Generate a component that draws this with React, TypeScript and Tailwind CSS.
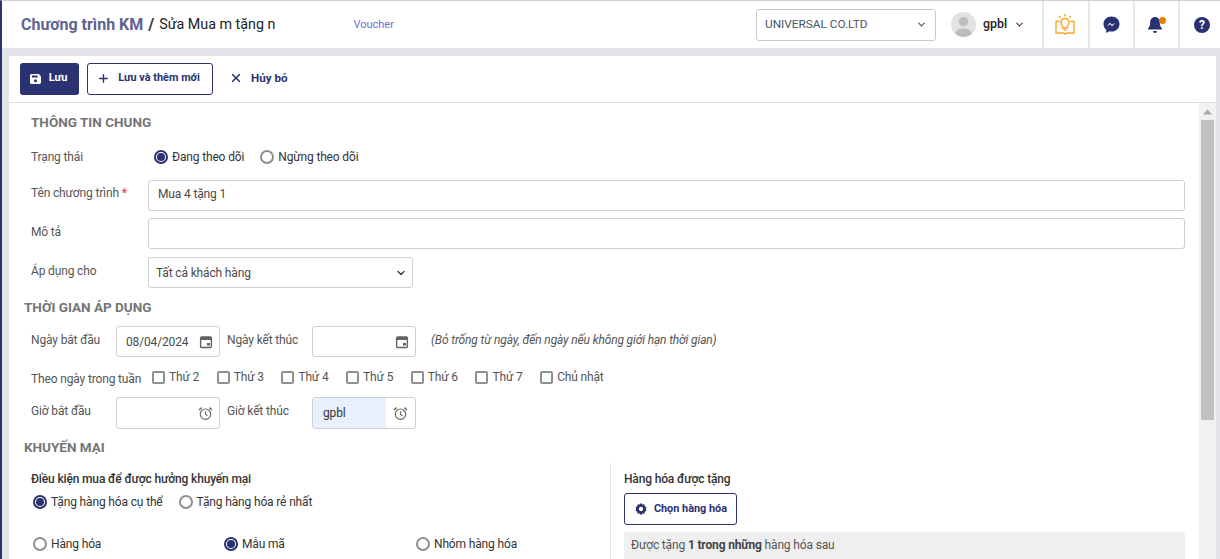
import React from "react";
import { ChevronDown, Plus, X } from "lucide-react";

const NAVY = "#2a3272";

function Radio({ checked, label, className = "" }: { checked?: boolean; label: string; className?: string }) {
  return (
    <div className={`flex items-center ${className}`}>
      {checked ? (
        <span className="w-[14px] h-[14px] rounded-full border-2 border-[#2a3272] flex items-center justify-center shrink-0">
          <span className="w-[8px] h-[8px] rounded-full bg-[#2a3272]" />
        </span>
      ) : (
        <span className="w-[14px] h-[14px] rounded-full border-2 border-[#8f8f8f] shrink-0" />
      )}
      <span className="ml-[4px] text-[12px] text-[#333] whitespace-nowrap">{label}</span>
    </div>
  );
}

function Check({ label }: { label: string }) {
  return (
    <div className="flex items-center">
      <span className="w-[13px] h-[13px] rounded-[2px] border-2 border-[#8f8f8f] shrink-0" />
      <span className="ml-[4px] text-[12px] text-[#555] whitespace-nowrap">{label}</span>
    </div>
  );
}

function CalendarIcon() {
  return (
    <svg width="14" height="14" viewBox="0 0 14 14" className="shrink-0">
      <rect x="1.6" y="2" width="10.8" height="10.5" rx="1.2" fill="none" stroke="#5f6368" strokeWidth="1.4" />
      <rect x="1.6" y="2" width="10.8" height="3" fill="#5f6368" />
      <rect x="8" y="8" width="3" height="2.5" fill="#5f6368" />
    </svg>
  );
}

function ClockIcon() {
  return (
    <svg width="15" height="15" viewBox="0 0 15 15" className="shrink-0">
      <circle cx="7.5" cy="8.2" r="5.2" fill="none" stroke="#6b6b6b" strokeWidth="1.2" />
      <path d="M7.5 5.3v3l2 1.5" fill="none" stroke="#6b6b6b" strokeWidth="1.1" />
      <path d="M1 4 3.6 1.6M14 4 11.4 1.6" fill="none" stroke="#6b6b6b" strokeWidth="1.5" />
    </svg>
  );
}

function SectionTitle({ children }: { children: React.ReactNode }) {
  return <div className="text-[13.5px] tracking-normal font-bold text-[#757575] leading-[18px]">{children}</div>;
}

function BookBulb() {
  return (
    <svg width="20" height="21" viewBox="0 0 20 21" fill="none" stroke="#f9a52a" strokeWidth="1.4">
      <path d="M4.500 7.500H1v11.500h6.500c1.200 0 2 .4 2.500 1.200.5-.8 1.300-1.200 2.500-1.200H19V7.500h-3.500" />
      <path d="M10 4.500a4 4 0 0 0-2.400 7.200V14h4.800v-2.300A4 4 0 0 0 10 4.500Z" />
      <path d="M8.500 16h3M10 0v2.500M4 2.200l1.600 1.600M16 2.200l-1.600 1.600" />
    </svg>
  );
}

export default function App() {
  return (
    <div
      className="w-[1220px] h-[559px] overflow-hidden flex flex-col bg-[#e3e4e9] border-t border-[#cfcfcf] border-l-2 border-l-[#2a3272] text-[12px] tracking-[-0.15px]"
      style={{ fontFamily: "Roboto, 'Noto Sans', sans-serif" }}
    >
      <header className="h-[47px] shrink-0 bg-white flex items-center tracking-normal">
        <div className="ml-[19px] text-[16px] font-bold text-[#5f6390] whitespace-nowrap">Chương trình KM</div>
        <div className="ml-[5px] text-[16px] font-bold text-[#333]">/</div>
        <div className="ml-[5px] text-[14.3px] text-[#222] whitespace-nowrap">Sửa Mua m tặng n</div>
        <div className="ml-[78px] pt-[1px] text-[11px] text-[#6770d6]">Voucher</div>
        <div className="ml-auto flex items-center h-full">
          <div className="w-[180px] h-[32px] border border-[#c9c9c9] rounded-[3px] flex items-center px-[8px]">
            <span className="text-[11.8px] text-[#4a5568] flex-1 whitespace-nowrap">UNIVERSAL CO.LTD</span>
            <ChevronDown size={11} strokeWidth={2.5} color="#555" />
          </div>
          <div className="ml-[15px] w-[25px] h-[25px] rounded-full bg-[#e2e2e2] overflow-hidden flex justify-center">
            <svg width="25" height="25" viewBox="0 0 25 25">
              <circle cx="12.5" cy="9.5" r="4.6" fill="#bdbdbd" />
              <path d="M3.5 25c0-6 4-8.500 9-8.500s9 2.500 9 8.500Z" fill="#bdbdbd" />
            </svg>
          </div>
          <span className="ml-[7px] w-[23px] text-[12.4px] font-medium text-[#222]">gpbl</span>
          <span className="ml-[8px] mr-[17px]">
            <ChevronDown size={11} strokeWidth={2.5} color="#444" />
          </span>
          <div className="w-[46px] h-full border-l-2 border-[#e8e8e8] flex items-center justify-center pr-[3px]">
            <BookBulb />
          </div>
          <div className="w-[45px] h-full border-l-2 border-[#e8e8e8] flex items-center justify-center">
            <svg width="17" height="18" viewBox="0 0 17 18">
              <path d="M8.500 0.500C3.900 0.500.5 3.800.5 8c0 2.300 1 4.300 2.700 5.700V17l3-1.700c.7.200 1.500.3 2.300.3 4.600 0 8-3.300 8-7.600S13.100.5 8.500.5Z" fill={NAVY} />
              <path d="M3.800 10.200 7 6.800l2 2 3.300-2.100-3.200 3.500-2-2Z" fill="#fff" />
            </svg>
          </div>
          <div className="w-[45px] h-full border-l-2 border-[#e8e8e8] flex items-center justify-center pr-[3px]">
            <div className="relative w-[16px] h-[20px]">
              <svg width="16" height="20" viewBox="0 0 16 20">
                <path d="M8 2c-3 0-4.800 2.300-4.800 5.200 0 3.500-1 5-2.200 6.300v1h14v-1c-1.200-1.300-2.200-2.800-2.200-6.300C12.800 4.300 11 2 8 2Z" fill={NAVY} />
                <path d="M6 16h4a2 2 0 0 1-4 0Z" fill={NAVY} />
              </svg>
              <span className="absolute right-[-3px] top-[2px] w-[7px] h-[7px] rounded-full bg-[#ef7d00]" />
            </div>
          </div>
          <div className="w-[42px] h-full border-l-2 border-[#e8e8e8] flex items-center justify-center pl-[4px]">
            <span className="w-[16px] h-[16px] rounded-full bg-[#2a3272] text-white text-[12px] font-bold flex items-center justify-center">?</span>
          </div>
        </div>
      </header>

      <main className="mt-[8px] ml-[7px] mr-[4px] flex-1 min-h-0 flex flex-col bg-white">
        <div className="h-[47px] shrink-0 border-b border-[#dedede] flex items-center pl-[11px] pb-[1px] tracking-normal">
          <button className="w-[59px] h-[32px] rounded-[3px] bg-[#2a3272] text-white flex items-center justify-center text-[11px] font-bold pr-[2px]">
            <svg width="12" height="12" viewBox="0 0 12 12" className="mr-[7px]">
              <path d="M1.500 1h7.300L11 3.200v6.300c0 .8-.7 1.500-1.500 1.500h-8C.7 11 0 10.300 0 9.500v-7C0 1.700.7 1 1.500 1Z" fill="#fff" />
              <rect x="2" y="2.500" width="5.500" height="2" fill="#2a3272" />
              <circle cx="5.500" cy="7.800" r="1.500" fill="#2a3272" />
            </svg>
            Lưu
          </button>
          <button className="ml-[8px] w-[126px] h-[32px] rounded-[3px] border border-[#2a3272] text-[#2a3272] flex items-center justify-center text-[10.9px] font-bold pr-[3px]">
            <Plus size={13} strokeWidth={2.5} className="mr-[8px]" />
            Lưu và thêm mới
          </button>
          <div className="ml-[16px] flex items-center text-[#2a3272] text-[11.6px] font-bold">
            <X size={14} strokeWidth={2.5} className="mr-[8px]" />
            Hủy bỏ
          </div>
        </div>

        <div className="flex-1 min-h-0 flex">
          <div className="flex-1 min-w-0 overflow-hidden relative">
            <div className="pl-[22px] pt-[10px]">
              <SectionTitle>THÔNG TIN CHUNG</SectionTitle>
              <div className="flex items-center h-[20px] mt-[16px]">
                <span className="w-[123px] text-[#555]">Trạng thái</span>
                <Radio checked label="Đang theo dõi" />
                <Radio label="Ngừng theo dõi" className="ml-[16px]" />
              </div>
              <div className="flex mt-[13px]">
                <span className="w-[117px] text-[#555] pt-[6px] leading-[14px]">
                  Tên chương trình <span className="text-[#e53935]">*</span>
                </span>
                <div className="w-[1037px] h-[31px] border border-[#d0d0d0] rounded-[3px] flex items-center pl-[9px] pb-[3px] text-[#4a4a4a]">Mua 4 tặng 1</div>
              </div>
              <div className="flex mt-[7px]">
                <span className="w-[117px] text-[#555] pt-[7px] leading-[14px]">Mô tả</span>
                <div className="w-[1037px] h-[31px] border border-[#d0d0d0] rounded-[3px]" />
              </div>
              <div className="flex mt-[8px]">
                <span className="w-[117px] text-[#555] pt-[7px] leading-[14px]">Áp dụng cho</span>
                <div className="w-[265px] h-[31px] border border-[#d0d0d0] rounded-[3px] flex items-center pl-[7px] pr-[5px] text-[#4a4a4a]">
                  <span className="flex-1">Tất cả khách hàng</span>
                  <ChevronDown size={12} strokeWidth={2.5} color="#333" />
                </div>
              </div>
            </div>

            <div className="pl-[15px] mt-[10px]">
              <SectionTitle>THỜI GIAN ÁP DỤNG</SectionTitle>
            </div>
            <div className="pl-[22px] mt-[10px]">
              <div className="flex">
                <span className="w-[85px] text-[#555] pt-[7px] leading-[14px]">Ngày bắt đầu</span>
                <div className="w-[104px] h-[31px] border border-[#d0d0d0] rounded-[3px] flex items-center justify-between pl-[9px] pr-[6px] text-[#4a4a4a]">
                  <span>08/04/2024</span>
                  <CalendarIcon />
                </div>
                <span className="w-[92px] pl-[7px] text-[#555] pt-[7px] leading-[14px] whitespace-nowrap">Ngày kết thúc</span>
                <div className="w-[104px] h-[31px] border border-[#d0d0d0] rounded-[3px] flex items-center justify-end pr-[6px]">
                  <CalendarIcon />
                </div>
                <span className="ml-[15px] pt-[7px] leading-[14px] italic text-[#555] whitespace-nowrap">(Bỏ trống từ ngày, đến ngày nếu không giới hạn thời gian)</span>
              </div>
              <div className="flex items-center mt-[10px] h-[20px]">
                <span className="w-[121px] text-[#555] whitespace-nowrap pt-[3px]">Theo ngày trong tuần</span>
                <div className="grid grid-cols-[repeat(7,64.7px)] items-center">
                  <Check label="Thứ 2" />
                  <Check label="Thứ 3" />
                  <Check label="Thứ 4" />
                  <Check label="Thứ 5" />
                  <Check label="Thứ 6" />
                  <Check label="Thứ 7" />
                  <Check label="Chủ nhật" />
                </div>
              </div>
              <div className="flex mt-[10px]">
                <span className="w-[85px] text-[#555] pt-[7px] leading-[14px]">Giờ bắt đầu</span>
                <div className="w-[104px] h-[32px] border border-[#d0d0d0] rounded-[3px] flex items-center justify-end pr-[6px]">
                  <ClockIcon />
                </div>
                <span className="w-[92px] pl-[7px] text-[#555] pt-[7px] leading-[14px] whitespace-nowrap">Giờ kết thúc</span>
                <div className="w-[104px] h-[32px] border border-[#d0d0d0] rounded-[3px] flex items-center overflow-hidden">
                  <div className="w-[73px] h-full bg-[#e8f0fe] flex items-center pl-[10px] text-[#333]">gpbl</div>
                  <div className="flex-1 flex justify-center"><ClockIcon /></div>
                </div>
              </div>
            </div>

            <div className="pl-[15px] mt-[9px]">
              <SectionTitle>KHUYẾN MẠI</SectionTitle>
            </div>

            <div className="flex mt-[7px]">
              <div className="w-[601px] pl-[22px] pt-[8px]">
                <div className="text-[12px] font-medium text-[#333] leading-[16px]">Điều kiện mua để được hưởng khuyến mại</div>
                <div className="flex items-center h-[20px] mt-[5px] pl-[2px]">
                  <Radio checked label="Tặng hàng hóa cụ thể" />
                  <Radio label="Tặng hàng hóa rẻ nhất" className="ml-[16px]" />
                </div>
                <div className="grid grid-cols-[191px_192px_1fr] h-[20px] mt-[22px] pl-[2px] items-center">
                  <Radio label="Hàng hóa" />
                  <Radio checked label="Mẫu mã" />
                  <Radio label="Nhóm hàng hóa" />
                </div>
              </div>
              <div className="flex-1 border-l border-[#e0e0e0] pl-[13px] pt-[8px] min-w-0 h-[120px]">
                <div className="text-[12px] font-medium text-[#333] leading-[16px]">Hàng hóa được tặng</div>
                <button className="mt-[6px] w-[113px] h-[32px] rounded-[3px] border border-[#2a3272] text-[#2a3272] flex items-center justify-center text-[10.9px] font-bold tracking-normal">
                  <svg width="14" height="14" viewBox="0 0 24 24" className="mr-[6px]">
                    <path fill="#2a3272" fillRule="evenodd" d="M12 1.500l2.300 2.600 3.400-.3.8 3.300 3 1.700-1.300 3.200 1.300 3.200-3 1.700-.8 3.300-3.400-.3-2.300 2.600-2.300-2.600-3.400.3-.8-3.300-3-1.700L3.800 12 2.500 8.800l3-1.700.8-3.300 3.400.3ZM12 8.300a3.700 3.700 0 1 0 0 7.400 3.700 3.700 0 0 0 0-7.400Z" />
                  </svg>
                  Chọn hàng hóa
                </button>
                <div className="mt-[7px] w-[561px] h-[40px] bg-[#efefef] rounded-t-[3px] pl-[7px] pt-[6px] leading-[14px] text-[#555]">
                  Được tặng <b className="text-[#444]">1 trong những</b> hàng hóa sau
                </div>
              </div>
            </div>
          </div>

          <div className="w-[17px] shrink-0 bg-[#f1f1f1] flex flex-col items-center">
            <svg width="9" height="6" viewBox="0 0 9 6" className="mt-[6px]">
              <path d="M4.500 0.500 9 5.500H0Z" fill="#a8a8a8" />
            </svg>
            <div className="w-[13px] h-[300px] bg-[#c1c1c1] mt-[5px]" />
          </div>
        </div>
      </main>
    </div>
  );
}
